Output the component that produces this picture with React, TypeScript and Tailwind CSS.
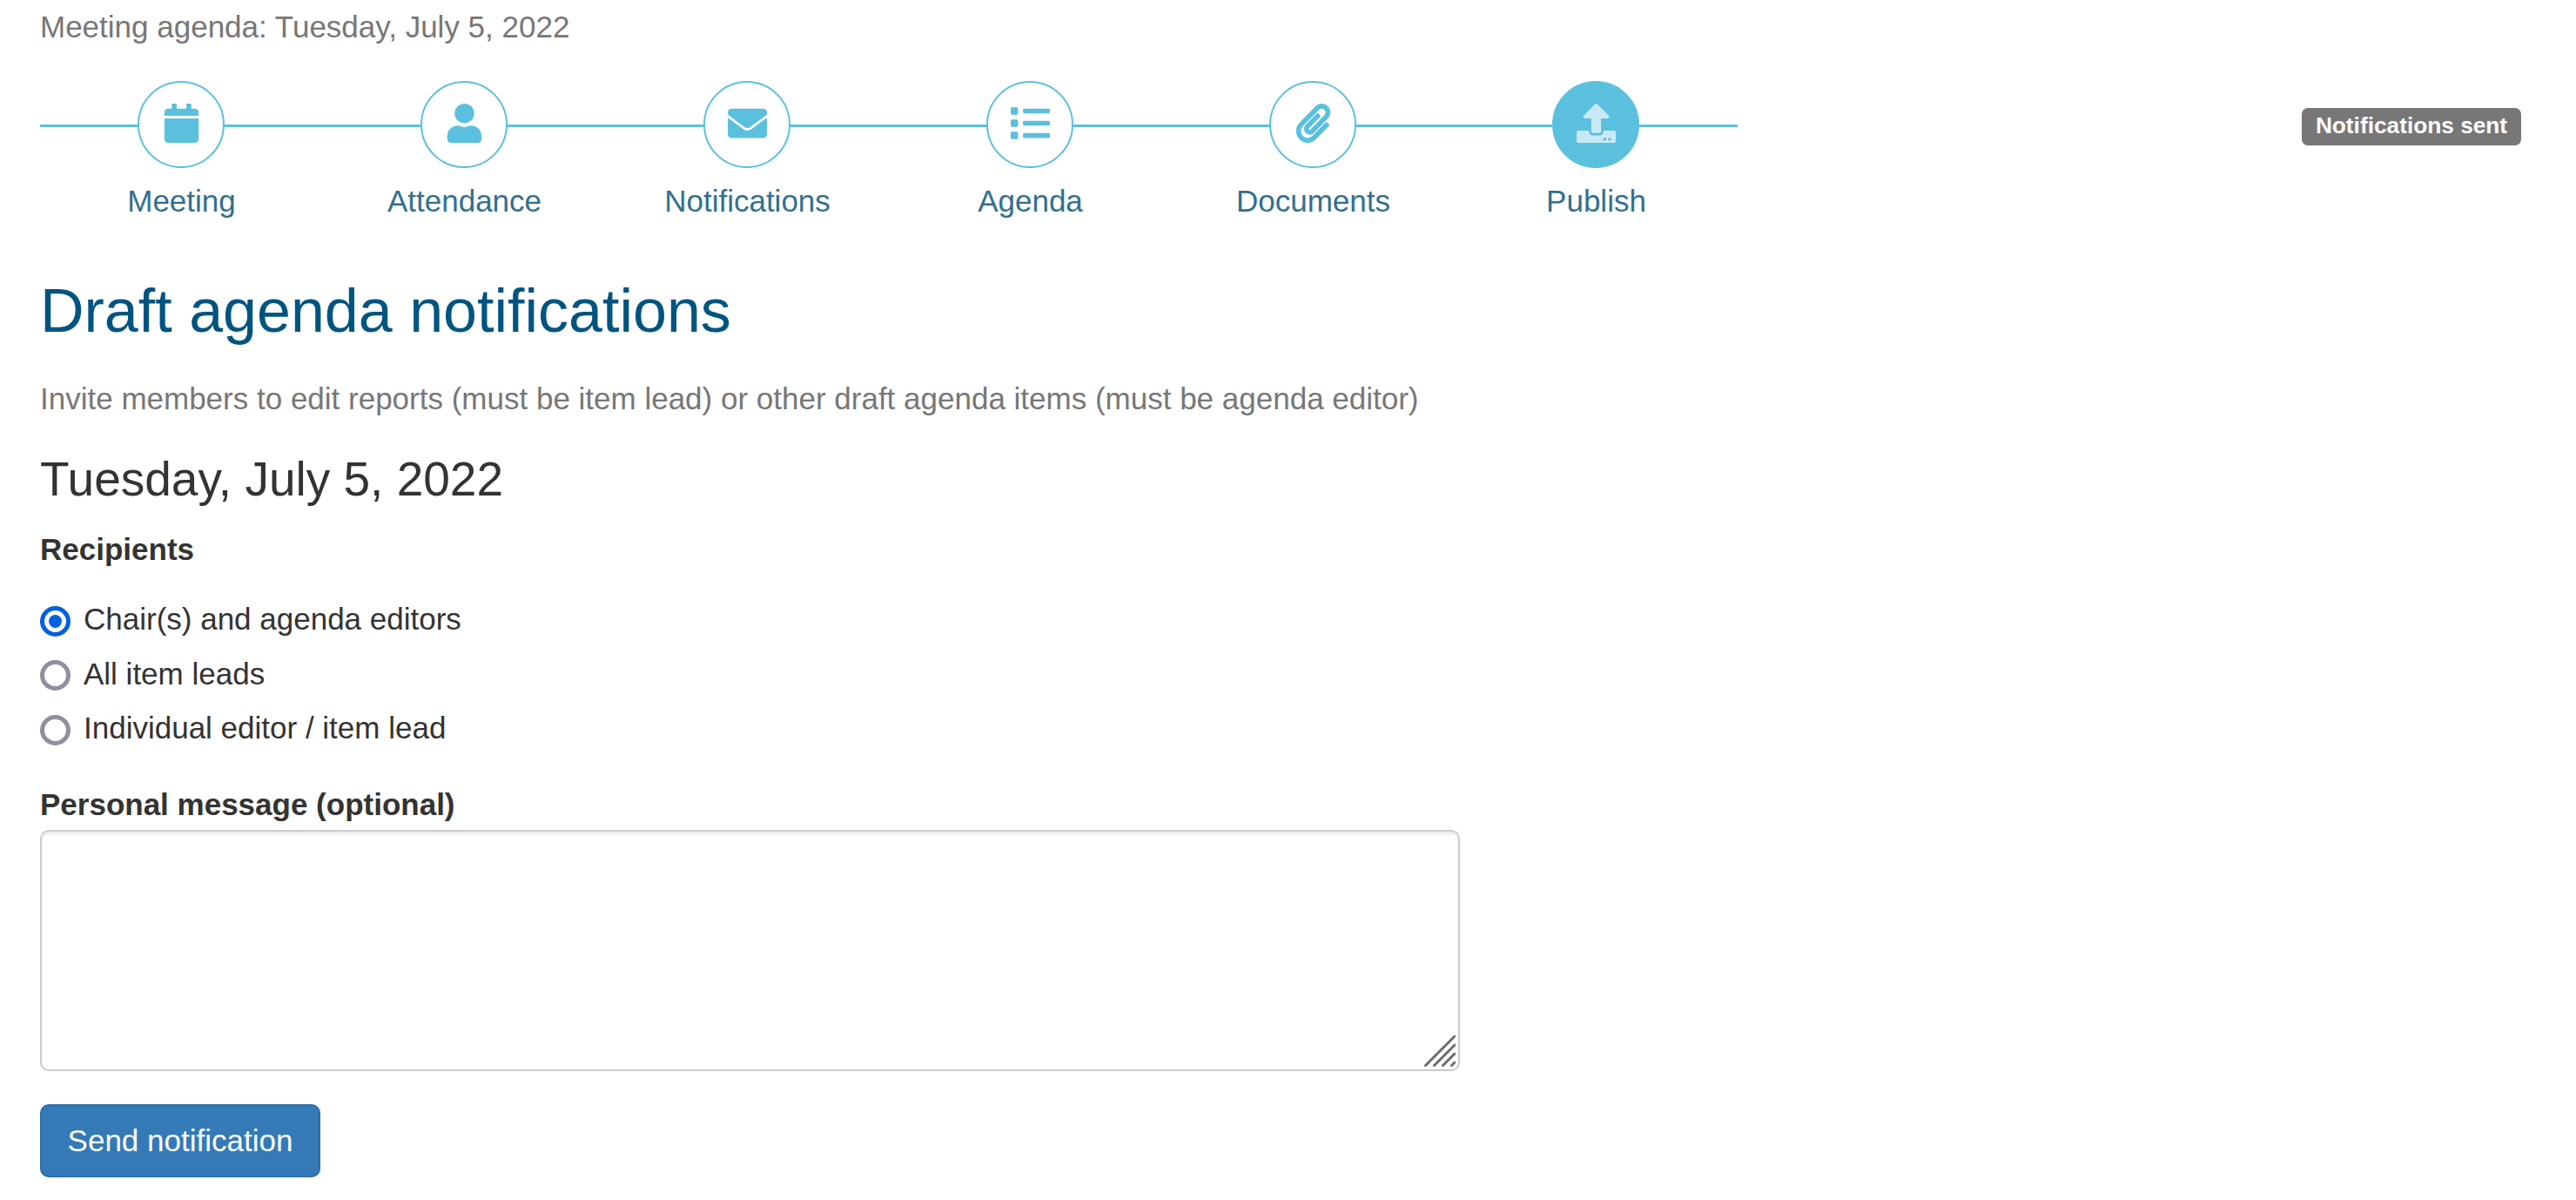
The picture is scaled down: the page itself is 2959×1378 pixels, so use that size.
import { useState } from 'react';
import { FaCalendar, FaUser, FaEnvelope, FaList, FaPaperclip, FaUpload } from 'react-icons/fa';

const steps = [
  { label: 'Meeting', icon: FaCalendar },
  { label: 'Attendance', icon: FaUser },
  { label: 'Notifications', icon: FaEnvelope },
  { label: 'Agenda', icon: FaList },
  { label: 'Documents', icon: FaPaperclip },
  { label: 'Publish', icon: FaUpload },
];

const recipients = [
  { value: 'editors', label: 'Chair(s) and agenda editors', className: 'mt-[30px]', inputClass: 'mt-[5px]' },
  { value: 'leads', label: 'All item leads', className: 'mt-[13px]', inputClass: 'mt-[3px]' },
  { value: 'individual', label: 'Individual editor / item lead', className: 'mt-3', inputClass: 'mt-[5px]' },
];

interface StepProps {
  label: string;
  icon: typeof FaCalendar;
  active: boolean;
}

function Step({ label, icon: Icon, active }: StepProps) {
  return (
    <a href="#" className="flex w-[325px] flex-col items-center">
      <div className="flex w-full items-center">
        <div className="mt-[3px] h-[3px] w-[112px] bg-[#5bc0de]" />
        <div
          className={`flex size-[100px] items-center justify-center rounded-full border-2 border-[#5bc0de] pb-1 ${
            active ? 'bg-[#5bc0de] text-[#c8e9f3]' : 'bg-white text-[#5bc0de]'
          }`}
        >
          <Icon size={45} />
        </div>
        <div className="mt-[3px] h-[3px] flex-1 bg-[#5bc0de]" />
      </div>
      <span className="mt-[13px] text-[#31708f]">{label}</span>
    </a>
  );
}

export default function App() {
  const [recipient, setRecipient] = useState('editors');
  const [message, setMessage] = useState('');

  return (
    <div className="h-[1378px] overflow-hidden bg-white px-[46px] pt-[6px] font-['Liberation_Sans',Arial,sans-serif] text-[35px] leading-[50px] text-[#333]">
      <p className="text-[#777]">Meeting agenda: Tuesday, July 5, 2022</p>

      {/* Progress */}
      <div className="mt-[37px] flex items-start justify-between">
        <nav className="flex">
          {steps.map((step, i) => (
            <Step key={step.label} label={step.label} icon={step.icon} active={i === steps.length - 1} />
          ))}
        </nav>
        <span className="mt-[31px] mr-[17px] flex h-[43px] w-[252px] justify-center rounded-[7px] bg-[#777] pt-[5px] text-[26.25px] leading-[30px] font-bold whitespace-nowrap text-white">
          Notifications sent
        </span>
      </div>

      <h1 className="mt-[63px] text-[70px] leading-[77px] text-[#005580]">Draft agenda notifications</h1>
      <p className="mt-[37px] text-[#777]">
        Invite members to edit reports (must be item lead) or other draft agenda items (must be agenda editor)
      </p>
      <h2 className="mt-[37px] text-[55px] leading-[60px]">Tuesday, July 5, 2022</h2>

      {/* Recipients */}
      <p className="mt-[26px] font-bold">Recipients</p>
      {recipients.map((r) => (
        <label key={r.value} className={`flex h-[50px] items-center gap-[15px] ${r.className}`}>
          <input
            type="radio"
            name="recipient"
            checked={recipient === r.value}
            onChange={() => setRecipient(r.value)}
            className={`size-[35px] appearance-none rounded-full border-5 border-[#8f8f9d] bg-white checked:border-[#0060df] checked:bg-[#0060df] checked:bg-clip-content checked:p-[5px] ${r.inputClass}`}
          />
          {r.label}
        </label>
      ))}

      {/* Message */}
      <label htmlFor="message" className="mt-[38px] block font-bold">
        Personal message (optional)
      </label>
      <div className="relative mt-1 h-[277px] w-[1631px]">
        <textarea
          id="message"
          value={message}
          onChange={(e) => setMessage(e.target.value)}
          className="block size-full resize-none rounded-[10px] border-2 border-[#ccc] px-[30px] py-[15px] shadow-[inset_0_3px_3px_rgba(0,0,0,0.08)] outline-none"
        />
        <svg
          className="pointer-events-none absolute right-[5px] bottom-[5px]"
          width="36"
          height="36"
          stroke="#6b6b6b"
          strokeWidth="3"
          strokeLinecap="round"
        >
          <path d="M1.5 34.5 35 1M11.5 34.5 35 11M21.5 34.5 35 21M31.5 34.5 35 31" />
        </svg>
      </div>

      <button className="mt-[38px] flex h-[84px] w-[322px] items-center justify-center rounded-[10px] border-2 border-[#2e6da4] bg-[#337ab7] text-white">
        Send notification
      </button>
    </div>
  );
}
